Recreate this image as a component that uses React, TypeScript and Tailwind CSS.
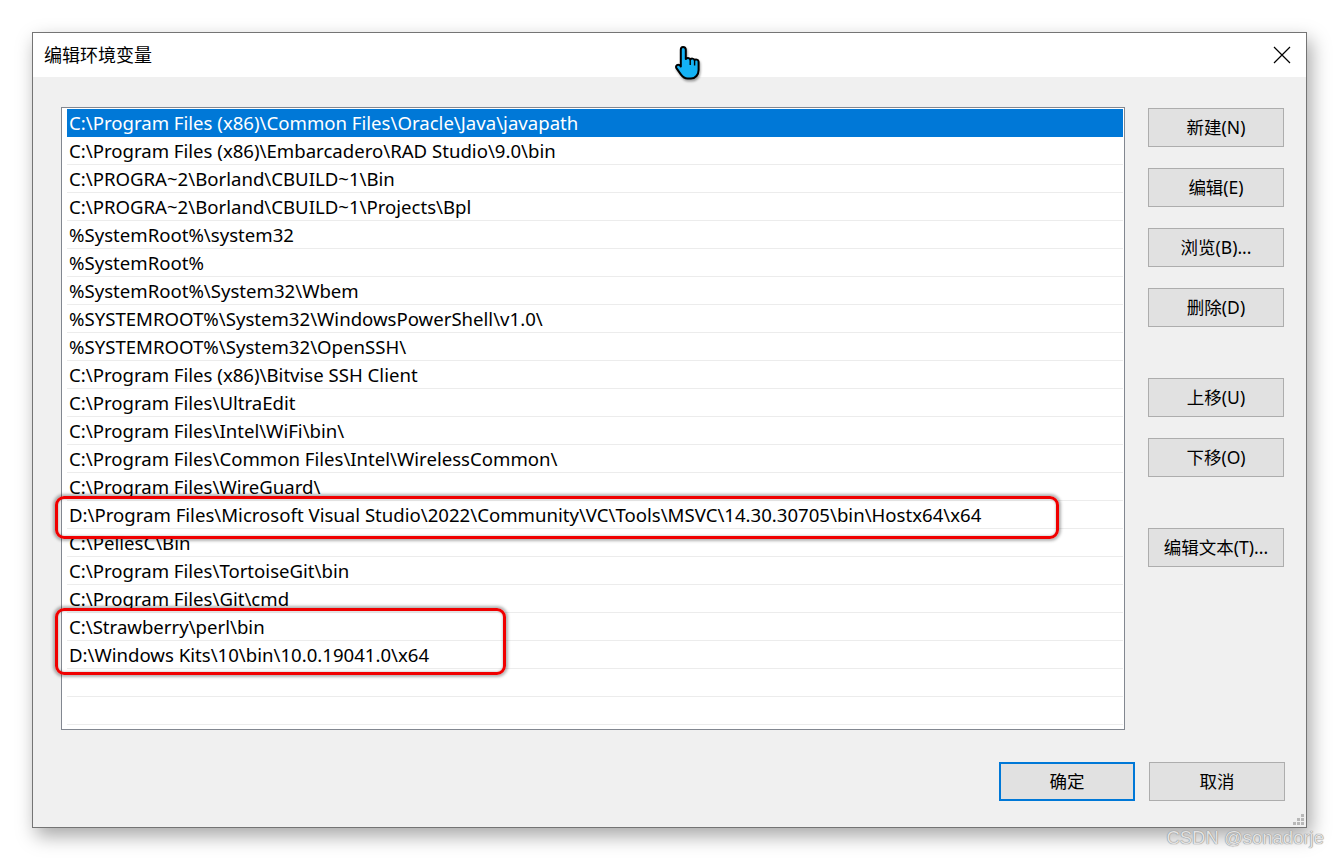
const paths = [
  'C:\\Program Files (x86)\\Common Files\\Oracle\\Java\\javapath',
  'C:\\Program Files (x86)\\Embarcadero\\RAD Studio\\9.0\\bin',
  'C:\\PROGRA~2\\Borland\\CBUILD~1\\Bin',
  'C:\\PROGRA~2\\Borland\\CBUILD~1\\Projects\\Bpl',
  '%SystemRoot%\\system32',
  '%SystemRoot%',
  '%SystemRoot%\\System32\\Wbem',
  '%SYSTEMROOT%\\System32\\WindowsPowerShell\\v1.0\\',
  '%SYSTEMROOT%\\System32\\OpenSSH\\',
  'C:\\Program Files (x86)\\Bitvise SSH Client',
  'C:\\Program Files\\UltraEdit',
  'C:\\Program Files\\Intel\\WiFi\\bin\\',
  'C:\\Program Files\\Common Files\\Intel\\WirelessCommon\\',
  'C:\\Program Files\\WireGuard\\',
  'D:\\Program Files\\Microsoft Visual Studio\\2022\\Community\\VC\\Tools\\MSVC\\14.30.30705\\bin\\Hostx64\\x64',
  'C:\\PellesC\\Bin',
  'C:\\Program Files\\TortoiseGit\\bin',
  'C:\\Program Files\\Git\\cmd',
  'C:\\Strawberry\\perl\\bin',
  'D:\\Windows Kits\\10\\bin\\10.0.19041.0\\x64',
  '',
  '',
]

const sideButtons = [
  { label: '新建(N)', gap: 'mt-[1px]' },
  { label: '编辑(E)', gap: 'mt-[21px]' },
  { label: '浏览(B)...', gap: 'mt-[21px]' },
  { label: '删除(D)', gap: 'mt-[21px]' },
  { label: '上移(U)', gap: 'mt-[51px]' },
  { label: '下移(O)', gap: 'mt-[21px]' },
  { label: '编辑文本(T)...', gap: 'mt-[51px]' },
]

function WinButton({ label, focused, className = '' }: { label: string; focused?: boolean; className?: string }) {
  return (
    <button
      className={`w-[136px] h-[39px] bg-[#e1e1e1] text-[17.5px] text-black flex items-center justify-center ${
        focused ? 'border-2 border-[#0078d7]' : 'border border-[#adadad]'
      } ${className}`}
    >
      {label}
    </button>
  )
}

function CloseIcon() {
  return (
    <svg width="18" height="18" viewBox="0 0 18 18">
      <path d="M1 1L17 17M17 1L1 17" stroke="#000" strokeWidth="1.2" />
    </svg>
  )
}

function HandCursor() {
  return (
    <svg
      width="32"
      height="38"
      viewBox="0 0 32 38"
      className="absolute left-[673px] top-[44px] drop-shadow-[1px_2px_1px_rgba(0,0,0,0.35)]"
    >
      <path
        d="M10 3c1.7 0 2.8 1.1 2.8 2.8V15c0.6-1.4 4-1.4 4.4 0.6c0.6-1.4 4-1.4 4.4 0.6c0.8-1.2 4-0.8 4 1.6V26c0 4.6-3.2 8.5-7.6 8.5h-3.4c-3.2 0-5-1.6-6.6-3.8L3.6 24.4c-1.2-1.7-0.2-3.6 1.6-3.6c1.1 0 2.1 0.8 2.6 1.6V5.8C7.8 4.1 8.4 3 10 3z"
        fill="#14b2f5"
        stroke="#000"
        strokeWidth="2"
        strokeLinejoin="round"
      />
      <path d="M17.2 16v5M21.6 17v4.5" stroke="#000" strokeWidth="1.4" />
    </svg>
  )
}

function Grip() {
  const dots = [
    [8, 0],
    [4, 4],
    [8, 4],
    [0, 8],
    [4, 8],
    [8, 8],
  ]
  return (
    <svg width="11" height="11" className="absolute right-[2px] bottom-[2px]">
      {dots.map(([x, y]) => (
        <rect key={`${x}-${y}`} x={x} y={y} width="3" height="3" fill="#b8b8b8" />
      ))}
    </svg>
  )
}

export default function App() {
  return (
    <div
      className="relative w-[1339px] h-[860px] bg-white overflow-hidden pt-[32px] pl-[32px]"
      style={{ fontFamily: '"Noto Sans", "Noto Sans CJK SC", sans-serif' }}
    >
      <div className="relative w-[1275px] h-[796px] border border-[#747474] flex flex-col bg-[#f0f0f0] shadow-[4px_8px_18px_rgba(0,0,0,0.35)]">
        <div className="h-[44px] bg-white flex items-center justify-between pl-[11px] pr-[15px]">
          <span className="text-[18px] text-black">编辑环境变量</span>
          <CloseIcon />
        </div>

        <div className="flex-1 flex flex-col pt-[30px] pl-[28px] pr-[21px]">
          <div className="flex">
            <div className="relative w-[1064px] h-[623px] border border-[#828790] bg-white pt-[1px] pl-[5px] pr-[1px] overflow-hidden">
              {paths.map((p, i) => (
                <div
                  key={i}
                  className={`h-[28px] flex items-center pl-[2px] text-[18.6px] whitespace-nowrap ${
                    i === 0 ? 'bg-[#0078d7] text-white' : 'text-black border-b border-[#ececec]'
                  }`}
                >
                  {p}
                </div>
              ))}
            </div>

            <div className="ml-[23px] flex flex-col">
              {sideButtons.map((b) => (
                <WinButton key={b.label} label={b.label} className={b.gap} />
              ))}
            </div>
          </div>

          <div className="mt-[32px] flex justify-end gap-[14px]">
            <WinButton label="确定" focused />
            <WinButton label="取消" />
          </div>
        </div>

        <Grip />
      </div>

      {/* annotation frames drawn over the list */}
      <div className="absolute left-[55px] top-[496px] w-[1004px] h-[43px] rounded-[9px] border-[3px] border-[#f00000] shadow-[0_0_3px_2px_rgba(0,0,0,0.3),inset_0_0_2px_1px_rgba(0,0,0,0.15)]" />
      <div className="absolute left-[55px] top-[608px] w-[451px] h-[67px] rounded-[9px] border-[3px] border-[#f00000] shadow-[0_0_3px_2px_rgba(0,0,0,0.3),inset_0_0_2px_1px_rgba(0,0,0,0.15)]" />

      <HandCursor />

      <div
        className="absolute right-[15px] bottom-[8px] text-[18.5px] text-[#e2e2e2] [text-shadow:0_0_1px_#7a7a7a,0_0_1px_#9a9a9a]"
        style={{ fontFamily: '"Liberation Sans", sans-serif' }}
      >
        CSDN @sonadorje
      </div>
    </div>
  )
}
